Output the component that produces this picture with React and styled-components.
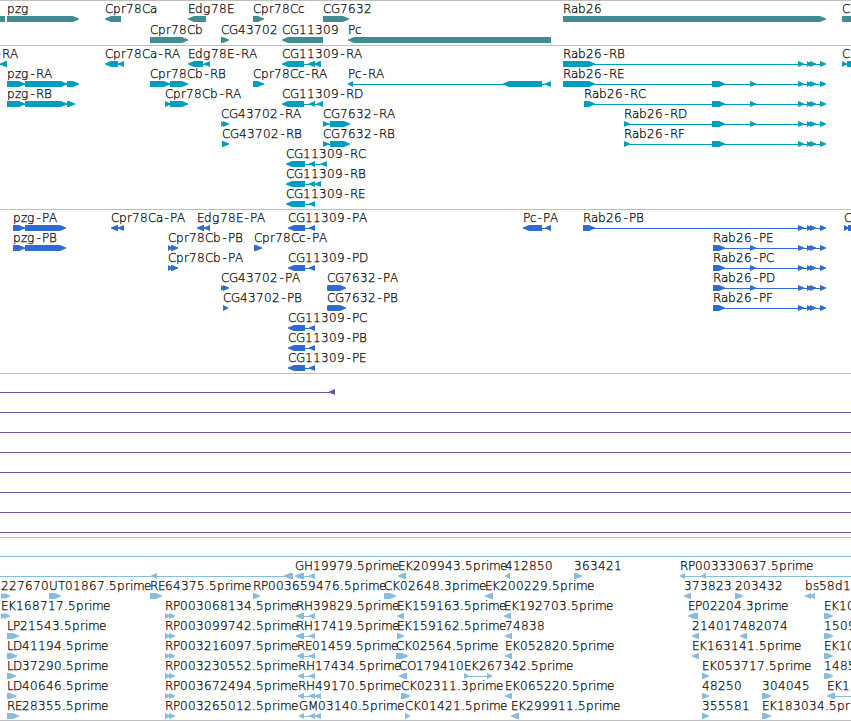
import React from "react";
import styled, { createGlobalStyle } from "styled-components";

const GlobalStyle = createGlobalStyle`
  body {
    margin: 0;
    background-color: #fff;
  }
`;
const Browser = styled.main`
  display: flex;
  flex-direction: column;
  width: 851px;
  height: 721px;
  overflow: hidden;
  background-color: #fff;
  border-top: 1px solid #bebebe;
  box-sizing: border-box;
`;
const Track = styled.section`
  display: flex;
  flex-direction: column;
  flex: none;
  padding-bottom: ${(props) => props.$gap}px;
  border-bottom: 1px solid #bebebe;
  color: ${(props) => props.$color};
`;
const Lane = styled.svg`
  display: block;
  flex: none;
  width: 851px;
  height: ${(props) => props.$height}px;
  overflow: visible;
  fill: currentColor;
`;
const Label = styled.text`
  font-family: "DejaVu Sans", sans-serif;
  font-size: 12px;
  font-weight: 200;
  fill: #000;
  stroke: #000;
  stroke-width: 0.25px;
`;

// label advances, in whole pixels
const ADVANCE = {
  ".": 4, "-": 7, A: 8, B: 8, C: 8, D: 9, E: 7, F: 7, G: 9, H: 9, K: 8,
  L: 6, M: 10, O: 9, P: 7, R: 8, T: 7, U: 9,
  a: 7, b: 8, c: 6, d: 8, e: 7, g: 8, i: 3, m: 11, p: 8, r: 5, s: 6, z: 6,
};

const letterPositions = (text, start) => {
  let x = start;
  return text
    .split("")
    .map((char) => {
      // the hyphen sits in the middle of its cell
      const at = char === "-" ? x + 1.5 : x;
      x += ADVANCE[char] || 8;
      return at;
    })
    .join(" ");
};

const HEAD = 6;
const TOP = 15;

const R = (label, exons, at) => ({ label, strand: 1, exons, at });
const L = (label, exons, at) => ({ label, strand: -1, exons, at });

const exonPath = ([a, b], strand) => {
  const head = Math.min(HEAD, b - a);
  if (strand > 0) {
    return `M${a} ${TOP}H${b - head}L${b} ${TOP + 2.6}V${TOP + 3.4}L${b - head} ${TOP + 6}H${a}Z`;
  }
  return `M${b} ${TOP}H${a + head}L${a} ${TOP + 2.6}V${TOP + 3.4}L${a + head} ${TOP + 6}H${b}Z`;
};

const Feature = ({ label, strand, exons, at }) => {
  const start = exons[0][0];
  const end = exons[exons.length - 1][1];
  return (
    <g>
      {exons.length > 1 && (
        <rect x={start + 1} y={TOP + 3} width={end - start - 2} height={1} />
      )}
      {exons.map((exon) => (
        <path key={exon[0]} d={exonPath(exon, strand)} />
      ))}
      {label && (
        <Label x={letterPositions(label, at ?? start)} y={12}>
          {label}
        </Label>
      )}
    </g>
  );
};

const rabTail = [[798, 804], [807, 812], [810, 816], [820, 826]];
const rabMid = [[712, 725], [750, 756], ...rabTail];
const rabCds = [[713, 725], [750, 756], ...rabTail];
const cgCds = [[288, 305], [309, 315]];
const cprCds = [[168, 172], [171, 178]];
const rp = [[165, 170], [169, 175]];
const across = [[-50, -40], [900, 910]];

const genes = [
  [
    L("", [[-20, 5]]),
    R("pzg", [[7, 79]]),
    L("Cpr78Ca", [[105, 121]]),
    L("Edg78E", [[188, 206]]),
    R("Cpr78Cc", [[253, 264]]),
    R("CG7632", [[323, 349]]),
    R("Rab26", [[563, 826]]),
    R("C", [[842, 900]]),
  ],
  [
    R("Cpr78Cb", [[150, 188]]),
    R("CG43702", [[221, 229]]),
    L("CG11309", [[282, 323]]),
    L("Pc", [[348, 551]]),
  ],
];

const transcripts = [
  [
    L("-RA", [[-20, -10], [0, 7]], -5),
    L("Cpr78Ca-RA", [[105, 118], [118, 124]]),
    L("Edg78E-RA", [[188, 203], [204, 210]]),
    L("CG11309-RA", [[282, 304], [308, 315], [314, 321]]),
    R("Rab26-RB", [[563, 595], ...rabTail]),
    R("C", [[842, 847], [847, 880]]),
  ],
  [
    R("pzg-RA", [[7, 25], [25, 67], [67, 79]]),
    R("Cpr78Cb-RB", [[150, 170], [170, 188]]),
    R("Cpr78Cc-RA", [[253, 264]]),
    L("Pc-RA", [[348, 353], [503, 542], [545, 551]]),
    R("Rab26-RE", [[563, 595], ...rabMid]),
  ],
  [
    R("pzg-RB", [[7, 25], [25, 67], [67, 75]]),
    R("Cpr78Cb-RA", [[165, 171], [170, 188]]),
    L("CG11309-RD", [[282, 304], [309, 315], [317, 323]]),
    R("Rab26-RC", [[584, 595], ...rabMid]),
  ],
  [
    R("CG43702-RA", [[221, 224], [223, 229]]),
    R("CG7632-RA", [[323, 329], [330, 350]]),
    R("Rab26-RD", [[624, 630], ...rabMid]),
  ],
  [
    R("CG43702-RB", [[222, 229]]),
    R("CG7632-RB", [[323, 329], [330, 350]]),
    R("Rab26-RF", [[624, 630], [712, 725], ...rabTail]),
  ],
  [L("CG11309-RC", [[286, 305], [309, 315], [321, 327]])],
  [L("CG11309-RB", [[286, 305], [309, 315], [315, 321]])],
  [L("CG11309-RE", [[286, 305], [309, 315]])],
];

const proteins = [
  [
    R("pzg-PA", [[13, 25], [25, 66]]),
    L("Cpr78Ca-PA", [[111, 118], [118, 124]]),
    L("Edg78E-PA", [[197, 204], [204, 210]]),
    L("CG11309-PA", cgCds),
    L("Pc-PA", [[523, 542], [545, 551]]),
    R("Rab26-PB", [[583, 595], ...rabTail]),
    R("C", [[844, 849], [848, 880]]),
  ],
  [
    R("pzg-PB", [[13, 25], [25, 66]]),
    R("Cpr78Cb-PB", cprCds),
    R("Cpr78Cc-PA", [[254, 262]]),
    R("Rab26-PE", rabCds),
  ],
  [
    R("Cpr78Cb-PA", cprCds),
    L("CG11309-PD", cgCds),
    R("Rab26-PC", rabCds),
  ],
  [
    R("CG43702-PA", [[221, 224], [223, 229]]),
    R("CG7632-PA", [[327, 330], [328, 346]]),
    R("Rab26-PD", rabCds),
  ],
  [
    R("CG43702-PB", [[223, 228]]),
    R("CG7632-PB", [[327, 330], [328, 346]]),
    R("Rab26-PF", [[713, 725], ...rabTail]),
  ],
  [L("CG11309-PC", cgCds)],
  [L("CG11309-PB", cgCds)],
  [L("CG11309-PE", cgCds)],
];

const alignments = [
  [L("", [[-20, -10], [329, 335]])],
  ...Array.from({ length: 7 }, () => [L("", across)]),
];

const ests = [
  [L("", across)],
  [
    L("", [[-20, -10], [151, 157], [284, 293]]),
    L("GH19979.5prime", [[295, 304], [309, 315]]),
    L("EK209943.5prime", [[398, 406]]),
    L("412850", [[505, 510]]),
    R("363421", [[574, 582]]),
    L("RP003330637.5prime", [[680, 685], [701, 706], [900, 910]]),
  ],
  [
    R("227670", [[1, 6], [4, 10]]),
    R("UT01867.5prime", [[49, 61]]),
    R("RE64375.5prime", [[150, 162]]),
    R("RP003659476.5prime", [[253, 260]]),
    R("CK02648.3prime", [[384, 396]]),
    L("EK200229.5prime", [[485, 493]]),
    L("373823", [[684, 691]]),
    R("203432", [[735, 743]]),
    L("bs58d1", [[805, 811], [809, 815]]),
  ],
  [
    R("EK168717.5prime", [[1, 6], [4, 10]]),
    R("RP003068134.5prime", rp),
    L("RH39829.5prime", [[296, 304], [309, 315]]),
    L("EK159163.5prime", [[397, 404]]),
    L("EK192703.5prime", [[504, 511]]),
    L("EP02204.3prime", [[688, 698]]),
    R("EK10", [[824, 833]]),
  ],
  [
    R("LP21543.5prime", [[7, 19]]),
    R("RP003099742.5prime", rp),
    L("RH17419.5prime", [[296, 304], [309, 315]]),
    R("EK159162.5prime", [[397, 404]]),
    L("74838", [[505, 512]]),
    L("214017", [[692, 699]]),
    L("482074", [[740, 747]]),
    R("1509", [[824, 833]]),
  ],
  [
    R("LD41194.5prime", [[7, 17]]),
    R("RP003216097.5prime", rp),
    L("RE01459.5prime", [[297, 304], [309, 315]]),
    R("CK02564.5prime", [[396, 408]]),
    L("EK052820.5prime", [[505, 512]]),
    L("EK163141.5prime", [[692, 699]]),
    R("EK10", [[824, 833]]),
  ],
  [
    R("LD37290.5prime", [[7, 16]]),
    R("RP003230552.5prime", rp),
    L("RH17434.5prime", [[298, 304], [309, 315]]),
    L("CO179410", [[399, 407]]),
    R("EK267342.5prime", [[464, 469], [487, 492]]),
    R("EK053717.5prime", [[702, 709]]),
    R("1485", [[824, 833]]),
  ],
  [
    R("LD40646.5prime", [[7, 16]]),
    R("RP003672494.5prime", rp),
    L("RH49170.5prime", [[298, 304], [309, 315], [315, 321]]),
    R("CK02311.3prime", [[401, 410]]),
    L("EK065220.5prime", [[505, 512]]),
    R("48250", [[702, 709]]),
    R("304045", [[762, 771]]),
    L("EK1", [[827, 835], [900, 910]]),
  ],
  [
    R("RE28355.5prime", [[7, 19]]),
    R("RP003265012.5prime", rp),
    L("GM03140.5prime", [[299, 304], [309, 315], [315, 321]]),
    R("CK01421.5prime", [[405, 410]]),
    L("EK299911.5prime", [[511, 519]]),
    R("355581", [[702, 709]]),
    R("EK183034.5pr", [[762, 771]]),
  ],
];

const tracks = [
  { name: "genes", color: "#3f8d92", laneHeight: 21, gap: 2, lanes: genes },
  { name: "transcripts", color: "#009dbf", laneHeight: 20, gap: 3, lanes: transcripts },
  { name: "proteins", color: "#306ccd", laneHeight: 20, gap: 3, lanes: proteins },
  { name: "alignments", color: "#7455a5", laneHeight: 20, gap: 3, lanes: alignments },
  { name: "ests", color: "#87bcdd", laneHeight: 20, gap: 2, lanes: ests },
];

const App = () => {
  return (
    <>
      <GlobalStyle />
      <Browser>
        {tracks.map(({ name, color, laneHeight, gap, lanes }) => (
          <Track key={name} $color={color} $gap={gap}>
            {lanes.map((features, lane) => (
              <Lane key={lane} $height={laneHeight}>
                {features.map((feature, i) => (
                  <Feature key={i} {...feature} />
                ))}
              </Lane>
            ))}
          </Track>
        ))}
      </Browser>
    </>
  );
};

export default App;
